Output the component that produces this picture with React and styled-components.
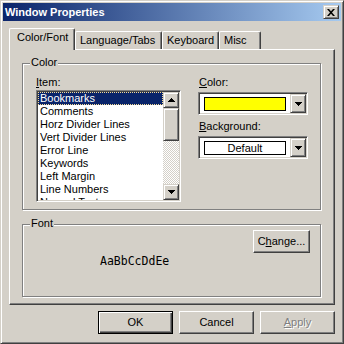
import React from 'react';
import styled, { createGlobalStyle, css } from 'styled-components';

const FACE = '#D4D0C8';
const SHADOW = '#808080';
const DARK = '#404040';

const GlobalStyle = createGlobalStyle`
  html, body {
    margin: 0;
    padding: 0;
    background: ${FACE};
  }
  body {
    font-family: "Liberation Sans", Arial, sans-serif;
    font-size: 11px;
    color: #000;
  }
`;

//---------------------------------------------------------------------

const frameBevel = css`
  border: 1px solid;
  border-color: ${FACE} ${DARK} ${DARK} ${FACE};
  box-shadow: inset 1px 1px #fff, inset -1px -1px ${SHADOW};
`;

const buttonBevel = css`
  border: 1px solid;
  border-color: #fff ${DARK} ${DARK} #fff;
  box-shadow: inset -1px -1px ${SHADOW};
`;

const sunkenBevel = css`
  border: 1px solid;
  border-color: ${SHADOW} #fff #fff ${SHADOW};
  box-shadow: inset 1px 1px ${DARK}, inset -1px -1px ${FACE};
`;

//---------------------------------------------------------------------

const items = [
  'Bookmarks',
  'Comments',
  'Horz Divider Lines',
  'Vert Divider Lines',
  'Error Line',
  'Keywords',
  'Left Margin',
  'Line Numbers',
  'Normal Text',
];

const tabs = [
  { label: 'Color/Font', width: 66, active: true },
  { label: 'Language/Tabs', width: 87 },
  { label: 'Keyboard', width: 57 },
  { label: 'Misc', width: 42 },
];

const Arrow = ({ down }) => (
  <svg width="7" height="4" viewBox="0 0 7 4" style={{ display: 'block' }}>
    <path
      fill="#000"
      d={
        down
          ? 'M0 0h7v1H0z M1 1h5v1H1z M2 2h3v1H2z M3 3h1v1H3z'
          : 'M3 0h1v1H3z M2 1h3v1H2z M1 2h5v1H1z M0 3h7v1H0z'
      }
    />
  </svg>
);

const App = () => {
  return (
    <>
      <GlobalStyle />
      <Window>
        <TitleBar>
          <Title>Window Properties</Title>
          <CloseButton>
            <svg width="8" height="7" viewBox="0 0 8 7">
              <path
                fill="#000"
                d="M0 0h2l2 2.3L6 0h2L5 3.5 8 7H6L4 4.7 2 7H0l3-3.5z"
              />
            </svg>
          </CloseButton>
        </TitleBar>

        <Body>
          <TabStrip>
            {tabs.map(t => (
              <Tab key={t.label} $active={t.active} $w={t.width}>
                {t.label}
              </Tab>
            ))}
          </TabStrip>

          <Panel>
            <Group $h={147}>
              <Legend>Color</Legend>
              <ColorRow>
                <ItemColumn>
                  <Label>
                    <U>I</U>tem:
                  </Label>
                  <ListBox>
                    <ListItems>
                      {items.map((name, i) => (
                        <ListItem key={name} $selected={i === 0}>
                          {name}
                        </ListItem>
                      ))}
                    </ListItems>
                    <ScrollBar>
                      <ScrollButton>
                        <Arrow />
                      </ScrollButton>
                      <Thumb />
                      <Track />
                      <ScrollButton>
                        <Arrow down />
                      </ScrollButton>
                    </ScrollBar>
                  </ListBox>
                </ItemColumn>

                <SideColumn>
                  <Label>
                    <U>C</U>olor:
                  </Label>
                  <Combo>
                    <ComboField>
                      <Swatch $color="#FFFF00" />
                    </ComboField>
                    <DropButton>
                      <Arrow down />
                    </DropButton>
                  </Combo>
                  <Label $top={5}>
                    <U>B</U>ackground:
                  </Label>
                  <Combo>
                    <ComboField>
                      <Swatch $color="#fff">Default</Swatch>
                    </ComboField>
                    <DropButton>
                      <Arrow down />
                    </DropButton>
                  </Combo>
                </SideColumn>
              </ColorRow>
            </Group>

            <Group $h={73}>
              <Legend>Font</Legend>
              <FontBody>
                <ButtonRow>
                  <Button $w={57}>
                    C<U>h</U>ange...
                  </Button>
                </ButtonRow>
                <Sample>AaBbCcDdEe</Sample>
              </FontBody>
            </Group>
          </Panel>

          <DialogButtons>
            <Button $default>OK</Button>
            <Button>Cancel</Button>
            <Button $disabled>
              <U>A</U>pply
            </Button>
          </DialogButtons>
        </Body>
      </Window>
    </>
  );
};

export default App;

//---------------------------------------------------------------------

const Window = styled.div`
  box-sizing: border-box;
  width: 344px;
  height: 344px;
  padding: 2px;
  background: ${FACE};
  display: flex;
  flex-direction: column;
  ${frameBevel};
`;

const TitleBar = styled.div`
  height: 18px;
  flex: none;
  display: flex;
  align-items: center;
  padding: 0 2px 0 2px;
  background: linear-gradient(to right, #0a246a, #a6caf0);
`;

const Title = styled.div`
  flex: 1;
  color: #fff;
  font-weight: bold;
  font-size: 11px;
  line-height: 13px;
`;

const CloseButton = styled.div`
  box-sizing: border-box;
  width: 16px;
  height: 14px;
  display: flex;
  align-items: center;
  justify-content: center;
  background: ${FACE};
  ${frameBevel};
`;

const Body = styled.div`
  flex: 1;
  display: flex;
  flex-direction: column;
  padding: 7px 6px 0 6px;
`;

const TabStrip = styled.div`
  height: 21px;
  display: flex;
  align-items: flex-end;
  position: relative;
  z-index: 1;
`;

const Tab = styled.div`
  box-sizing: border-box;
  width: ${p => p.$w}px;
  height: ${p => (p.$active ? 22 : 18)}px;
  margin-bottom: ${p => (p.$active ? -1 : 0)}px;
  padding: 2px 0 0 ${p => (p.$active ? 7 : 4)}px;
  line-height: 13px;
  white-space: nowrap;
  background: ${FACE};
  border-top: 1px solid #fff;
  border-left: 1px solid #fff;
  border-right: 1px solid ${DARK};
  border-radius: 2px 2px 0 0;
  box-shadow: inset -1px 0 ${SHADOW};
`;

const Panel = styled.div`
  box-sizing: border-box;
  height: 256px;
  flex: none;
  display: flex;
  flex-direction: column;
  gap: 14px;
  padding: 13px 12px 0 12px;
  ${buttonBevel};
`;

const Group = styled.div`
  position: relative;
  box-sizing: border-box;
  height: ${p => p.$h}px;
  margin-right: 1px;
  border: 1px solid ${SHADOW};
  box-shadow: inset 1px 1px #fff, 1px 1px #fff;
`;

const Legend = styled.span`
  position: absolute;
  top: -8px;
  left: 7px;
  padding: 0 1px;
  line-height: 13px;
  background: ${FACE};
`;

const ColorRow = styled.div`
  display: flex;
  gap: 17px;
  padding: 12px 0 0 13px;
`;

const ItemColumn = styled.div`
  display: flex;
  flex-direction: column;
`;

const SideColumn = styled.div`
  width: 110px;
  display: flex;
  flex-direction: column;
`;

const Label = styled.div`
  line-height: 13px;
  padding-left: 1px;
  margin-top: ${p => p.$top || 0}px;
  margin-bottom: 3px;

  ${ItemColumn} & {
    margin-bottom: 1px;
    padding-left: 0;
  }
`;

const U = styled.span`
  text-decoration: underline;
`;

const ListBox = styled.div`
  box-sizing: border-box;
  width: 145px;
  height: 112px;
  padding: 1px;
  background: #fff;
  display: flex;
  ${sunkenBevel};
`;

const ListItems = styled.div`
  flex: 1;
  overflow: hidden;
`;

const ListItem = styled.div`
  line-height: 13px;
  height: 13px;
  padding-left: 2px;
  white-space: nowrap;
  background: ${p => (p.$selected ? '#0a246a' : 'transparent')};
  color: ${p => (p.$selected ? '#fff' : '#000')};
  outline: ${p => (p.$selected ? '1px dotted #f5db95' : 'none')};
  outline-offset: -1px;
`;

const ScrollBar = styled.div`
  width: 16px;
  display: flex;
  flex-direction: column;
`;

const ScrollButton = styled.div`
  box-sizing: border-box;
  width: 16px;
  height: 16px;
  flex: none;
  display: flex;
  align-items: center;
  justify-content: center;
  background: ${FACE};
  ${frameBevel};
`;

const Thumb = styled.div`
  box-sizing: border-box;
  height: 33px;
  flex: none;
  background: ${FACE};
  ${frameBevel};
`;

const Track = styled.div`
  flex: 1;
  background: repeating-conic-gradient(#fff 0 25%, ${FACE} 0 50%) 0 0 / 2px 2px;
`;

const Combo = styled.div`
  box-sizing: border-box;
  width: 110px;
  height: 23px;
  padding: 1px;
  background: #fff;
  display: flex;
  ${sunkenBevel};
`;

const ComboField = styled.div`
  flex: 1;
  display: flex;
  padding: 3px 4px 2px 4px;
`;

const Swatch = styled.div`
  flex: 1;
  box-sizing: border-box;
  border: 1px solid #000;
  background: ${p => p.$color};
  text-align: center;
  line-height: 12px;
`;

const DropButton = styled.div`
  box-sizing: border-box;
  width: 16px;
  display: flex;
  align-items: center;
  justify-content: center;
  background: ${FACE};
  ${frameBevel};
`;

const FontBody = styled.div`
  display: flex;
  flex-direction: column;
  padding: 5px 10px 0 0;
`;

const ButtonRow = styled.div`
  display: flex;
  justify-content: flex-end;
`;

const Sample = styled.div`
  margin: 2px 0 0 77px;
  font-family: "DejaVu Sans Mono", monospace;
  font-size: 11.5px;
  line-height: 13px;
`;

const Button = styled.div`
  box-sizing: border-box;
  width: ${p => p.$w || 75}px;
  height: 23px;
  display: flex;
  align-items: center;
  justify-content: center;
  padding-bottom: 1px;
  background: ${FACE};
  line-height: 13px;
  ${buttonBevel};
  ${p =>
    p.$default &&
    css`
      border: 1px solid #000;
      box-shadow: inset 1px 1px #fff, inset -1px -1px ${DARK},
        inset -2px -2px ${SHADOW};
    `}
  ${p =>
    p.$disabled &&
    css`
      color: ${SHADOW};
      text-shadow: 1px 1px #fff;
    `}
`;

const DialogButtons = styled.div`
  display: flex;
  justify-content: flex-end;
  gap: 6px;
  margin-top: 6px;
`;
